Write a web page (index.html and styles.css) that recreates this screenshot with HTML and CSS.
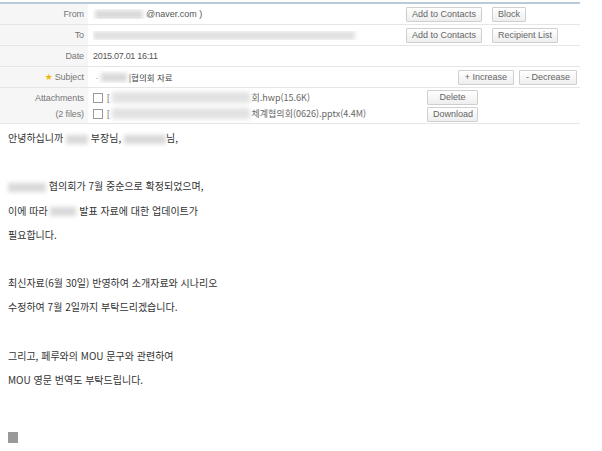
FILE: index.html
```html
<!DOCTYPE html>
<html lang="ko">
<head>
    <meta charset="UTF-8">
    <title>메일 읽기</title>
    <link rel="stylesheet" href="styles.css">
</head>
<body>
    <div class="mail-head">
        <div class="row">
            <div class="label">From</div>
            <div class="value">
                <span class="val-text"><span class="blur blur-from"></span>@naver.com )</span>
                <span class="btns">
                    <button>Add to Contacts</button>
                    <button>Block</button>
                </span>
            </div>
        </div>
        <div class="row">
            <div class="label">To</div>
            <div class="value">
                <span class="val-text"><span class="blur blur-to"></span></span>
                <span class="btns">
                    <button>Add to Contacts</button>
                    <button>Recipient List</button>
                </span>
            </div>
        </div>
        <div class="row">
            <div class="label">Date</div>
            <div class="value date">2015.07.01 16:11</div>
        </div>
        <div class="row">
            <div class="label"><span class="star">★</span> Subject</div>
            <div class="value subject">
                <span class="val-text ko">ᆞ<span class="blur blur-subj"></span>|협의회 자료</span>
                <span class="btns btns-right">
                    <button>+ Increase</button>
                    <button>- Decrease</button>
                </span>
            </div>
        </div>
        <div class="row row-files">
            <div class="label">Attachments<br>(2 files)</div>
            <div class="value">
                <div class="files">
                    <div class="file"><span class="check"></span>[<span class="blur blur-file"></span><span class="ko">회.hwp(15.6K)</span></div>
                    <div class="file"><span class="check"></span>[<span class="blur blur-file"></span><span class="ko">체계협의회(0626).pptx(4.4M)</span></div>
                </div>
                <div class="file-btns">
                    <button>Delete</button>
                    <button>Download</button>
                </div>
            </div>
        </div>
    </div>

    <div class="mail-body">
        <p>안녕하십니까 <span class="blur blur-name1"></span> 부장님, <span class="blur blur-name2"></span>님,</p>
        <p>&nbsp;</p>
        <p><span class="blur blur-org"></span> 협의회가 7월 중순으로 확정되었으며,</p>
        <p>이에 따라 <span class="blur blur-org2"></span> 발표 자료에 대한 업데이트가</p>
        <p>필요합니다.</p>
        <p>&nbsp;</p>
        <p>최신자료(6월 30일) 반영하여 소개자료와 시나리오</p>
        <p>수정하여 7월 2일까지 부탁드리겠습니다.</p>
        <p>&nbsp;</p>
        <p>그리고, 페루와의 MOU 문구와 관련하여</p>
        <p>MOU 영문 번역도 부탁드립니다.</p>
        <p>&nbsp;</p>
        <p>&nbsp;</p>
        <div class="sign"></div>
    </div>
</body>
</html>
```

FILE: styles.css
```css
body {
    margin: 0;
    background: #fff;
    font-family: "Liberation Sans", "Noto Sans CJK KR", sans-serif;
    color: #555;
}
.ko {
    font-family: "Noto Sans CJK KR", sans-serif;
}

/* header table */
.mail-head {
    width: 580px;
    margin-top: 2px;
    border-top: 2px solid #b9cbdb;
    font-size: 9px;
}
.row {
    display: grid;
    grid-template-columns: 88px 1fr;
    height: 20px;
    border-bottom: 1px solid #e6e6e6;
}
.row-files {
    height: 35px;
}
.label {
    background-color: #f6f6f6;
    color: #777;
    text-align: right;
    padding-right: 4px;
    display: flex;
    align-items: center;
    justify-content: flex-end;
    line-height: 16px;
    letter-spacing: -0.1px;
}
.star {
    color: #f2b705;
    font-family: "DejaVu Sans", sans-serif;
    font-size: 9px;
    margin-right: 2px;
}
.value {
    display: flex;
    align-items: center;
    padding-left: 5px;
    color: #555;
}
.date {
    letter-spacing: -0.3px;
    font-size: 9px;
}
.val-text {
    width: 313px;
    display: flex;
    align-items: center;
    white-space: nowrap;
    overflow: hidden;
}
.subject .val-text {
    color: #444;
    font-size: 8.5px;
}
.btns {
    display: flex;
    gap: 10px;
}
.btns-right {
    margin-left: auto;
    margin-right: 3px;
    gap: 5px;
}
button {
    height: 15px;
    padding: 0 5px;
    font-family: "Liberation Sans", sans-serif;
    font-size: 9px;
    color: #666;
    background: linear-gradient(#ffffff, #eeeeee);
    border: 1px solid #cfcfcf;
    border-radius: 1px;
    line-height: 13px;
}
.btns-right button {
    padding: 0 6px;
}

/* blurred / hidden parts */
.blur {
    display: inline-block;
    height: 9px;
    background: #d9d9d9;
    filter: blur(2px);
    vertical-align: middle;
}
.blur-from { width: 48px; margin: 0 3px 0 2px; }
.blur-to { width: 262px; background: #e0e0e0; }
.blur-subj { width: 26px; margin: 0 2px 0 0; }
.blur-file { width: 138px; height: 11px; margin: 0 2px; background: #e2e2e2; }
.blur-name1 { width: 22px; }
.blur-name2 { width: 42px; }
.blur-org { width: 38px; }
.blur-org2 { width: 26px; }

/* attachments */
.files {
    width: 334px;
    display: flex;
    flex-direction: column;
    gap: 4px;
}
.file {
    display: flex;
    align-items: center;
    height: 12px;
    color: #777;
    white-space: nowrap;
    font-size: 9px;
}
.file .ko {
    font-size: 9px;
    color: #666;
}
.check {
    width: 8px;
    height: 8px;
    border: 1px solid #9a9a9a;
    background: #fff;
    margin-right: 4px;
}
.file-btns {
    display: flex;
    flex-direction: column;
    gap: 2px;
}
.file-btns button {
    width: 51px;
}

/* message body */
.mail-body {
    padding: 2px 8px 0;
    font-family: "Noto Sans CJK KR", sans-serif;
    font-size: 10px;
    color: #333;
}
.mail-body p {
    margin: 0;
    line-height: 24.2px;
}
.sign {
    width: 10px;
    height: 11px;
    background: #999;
    margin-top: -9px;
}
```
